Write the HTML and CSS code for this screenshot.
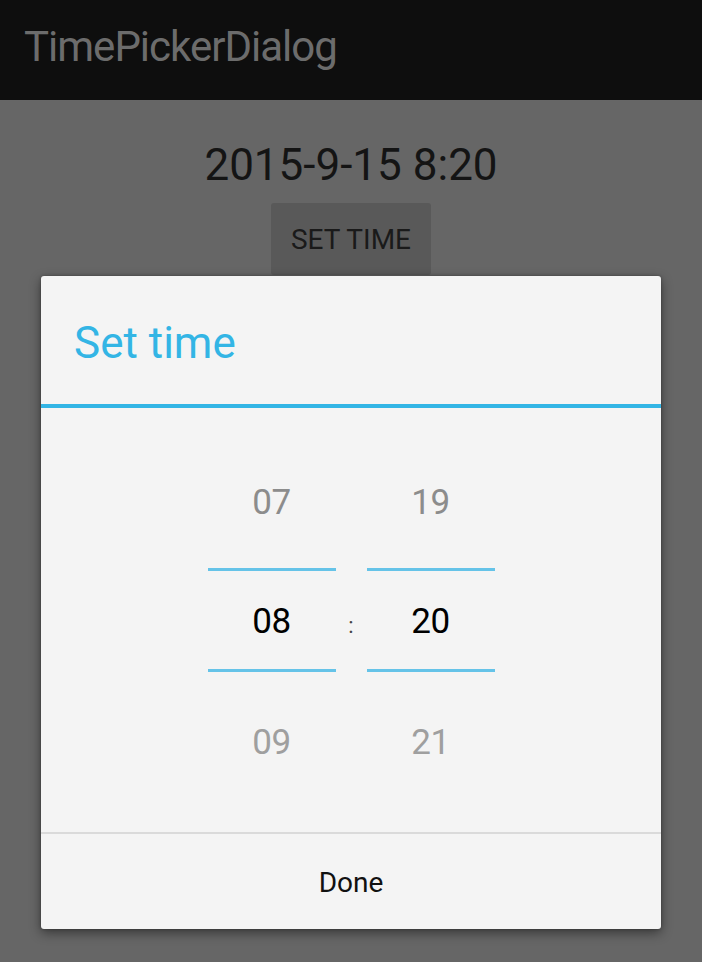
FILE: index.html
```html
<!DOCTYPE html>
<html>
<head>
<meta charset="utf-8">
<link rel="stylesheet" href="styles.css">
</head>
<body>
<div class="screen">
  <header class="actionbar"><span class="app-title">TimePickerDialog</span></header>
  <main class="content">
    <div class="date-text">2015-9-15 8:20</div>
    <div class="set-btn">SET TIME</div>
  </main>
  <div class="dialog">
    <div class="dialog-header"><span class="dialog-title">Set time</span></div>
    <div class="dialog-divider"></div>
    <div class="dialog-body">
      <div class="picker">
        <div class="column">
          <div class="cell cell-top">07</div>
          <div class="cell cell-mid">08</div>
          <div class="cell cell-bot">09</div>
        </div>
        <div class="colon">:</div>
        <div class="column">
          <div class="cell cell-top">19</div>
          <div class="cell cell-mid">20</div>
          <div class="cell cell-bot">21</div>
        </div>
      </div>
    </div>
    <div class="dialog-sep"></div>
    <div class="dialog-footer">Done</div>
  </div>
</div>
</body>
</html>
```
FILE: styles.css
```css
* { box-sizing: border-box; }
html, body { margin: 0; padding: 0; }
body {
  width: 702px;
  height: 962px;
  overflow: hidden;
  background: #666666;
  font-family: Roboto, "Liberation Sans", sans-serif;
}
.screen {
  position: relative;
  width: 702px;
  height: 962px;
}
.actionbar {
  height: 100px;
  background: #0e0e0e;
  padding-left: 24px;
}
.app-title {
  display: block;
  font-size: 42px;
  line-height: 94px;
  color: #6c6c6c;
  letter-spacing: -1px;
  font-weight: 400;
}
.content {
  display: flex;
  flex-direction: column;
  align-items: center;
  padding-top: 39px;
}
.date-text {
  font-size: 44px;
  line-height: 52px;
  color: #141414;
}
.set-btn {
  margin-top: 12px;
  width: 160px;
  height: 72px;
  padding-top: 2px;
  background: #595959;
  border-radius: 3px;
  font-size: 28px;
  line-height: 70px;
  text-align: center;
  color: #1a1a1a;
}
.dialog {
  position: absolute;
  left: 41px;
  top: 276px;
  width: 620px;
  height: 653px;
  background: #f4f4f4;
  border-radius: 3px;
  box-shadow: 0 4px 12px rgba(0,0,0,0.45), 0 0 3px rgba(0,0,0,0.3);
  display: flex;
  flex-direction: column;
}
.dialog-header {
  height: 128px;
  padding-top: 6px;
  padding-left: 33px;
}
.dialog-title {
  display: block;
  font-size: 44px;
  line-height: 122px;
  color: #33b5e5;
}
.dialog-divider {
  height: 4px;
  background: #33b5e5;
}
.dialog-body {
  height: 424px;
  display: flex;
  justify-content: center;
  padding-top: 26px;
}
.picker {
  display: flex;
  align-items: flex-start;
}
.column {
  width: 128px;
  display: flex;
  flex-direction: column;
}
.cell {
  text-align: center;
  font-size: 35px;
  letter-spacing: -0.5px;
}
.cell-top {
  height: 134px;
  padding-top: 3px;
  line-height: 131px;
  color: #8c8c8c;
}
.cell-mid {
  height: 104px;
  padding-top: 3px;
  line-height: 95px;
  border-top: 3px solid #65c3e8;
  border-bottom: 3px solid #65c3e8;
  color: #000;
}
.cell-bot {
  height: 138px;
  padding-top: 3px;
  line-height: 135px;
  color: #9f9f9f;
}
.colon {
  width: 31px;
  text-align: center;
  font-size: 22px;
  color: #444;
  margin-top: 134px;
  padding-top: 3px;
  line-height: 110px;
}
.dialog-sep {
  height: 2px;
  background: #dadada;
}
.dialog-footer {
  flex: 1;
  padding-top: 2px;
  text-align: center;
  font-size: 28px;
  line-height: 93px;
  color: #111;
}
```
